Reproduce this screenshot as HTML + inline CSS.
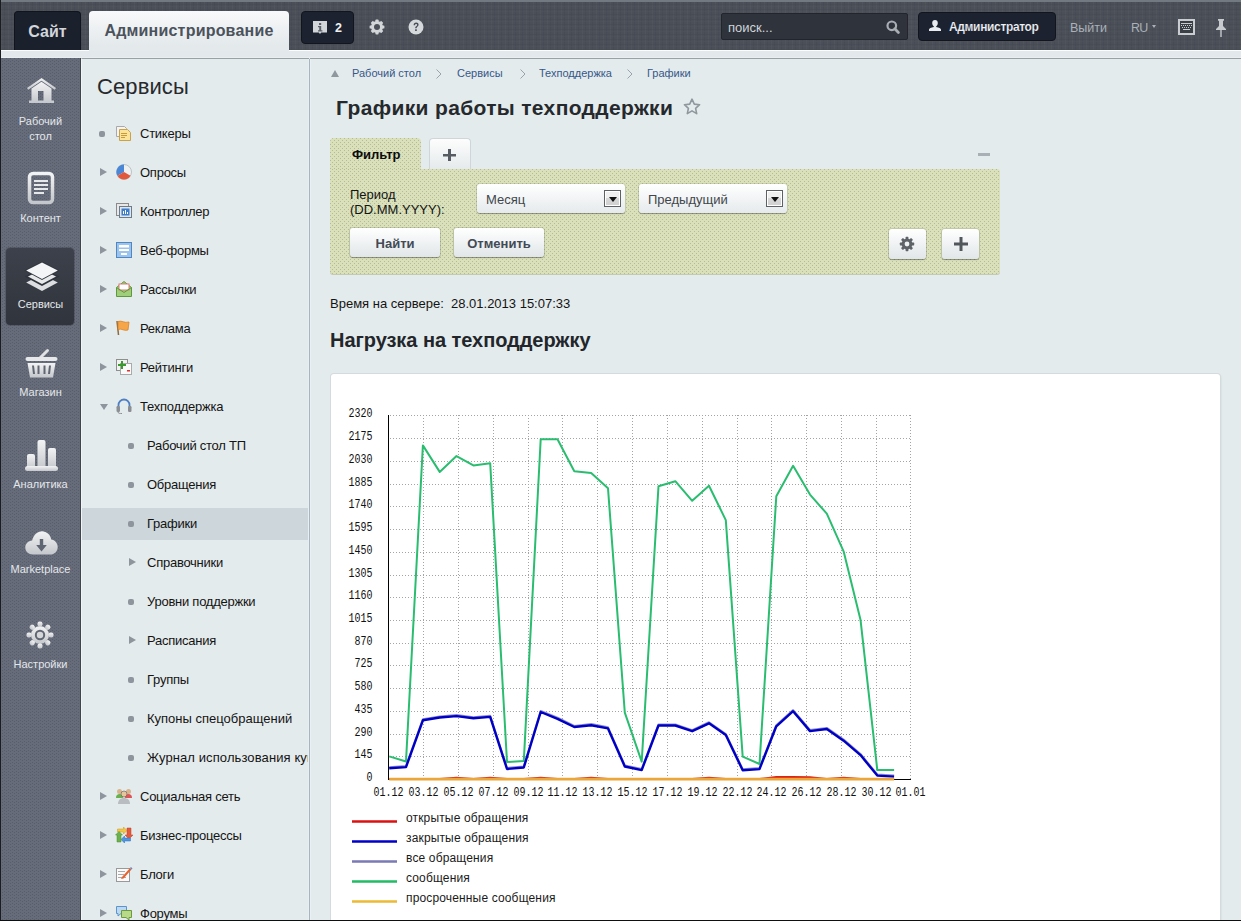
<!DOCTYPE html>
<html><head><meta charset="utf-8">
<style>
*{box-sizing:border-box;margin:0;padding:0}
html,body{width:1241px;height:921px;overflow:hidden;background:#e3e9eb;font-family:"Liberation Sans",sans-serif;position:relative}
.a{position:absolute}
svg{position:absolute;overflow:visible}
#frameL{left:0;top:0;width:1px;height:921px;background:#1b1d20;z-index:50}
#frameB{left:0;top:920px;width:1241px;height:1px;background:#0e0f10;z-index:50}
#hdr{left:0;top:0;width:1241px;height:50px;background:#4a4f58;border-top:2px solid #737980}
#strip{left:0;top:50px;width:1241px;height:8px;background:linear-gradient(#fbfcfc 0,#fbfcfc 1px,#e2e8eb 1px,#e2e8eb 7px,#e9eef0 7px)}
#side{left:0;top:58px;width:81px;height:863px;background-color:#666c7a;border-right:1px solid #3f444d}
#menu{left:81px;top:58px;width:228px;height:863px;background:#e4ebec;border-left:1px solid #f0f5f6;border-top:1px solid #9aa0a5}
#mline{left:308px;top:59px;width:3px;height:862px;background:linear-gradient(90deg,#e6eff4 0,#e6eff4 1px,#a9b4bc 1px,#a9b4bc 2px,#e8f1f4 2px)}
#content{left:310px;top:58px;width:931px;height:863px;background:#e4ebec;border-top:1px solid #9aa0a5}
.tabS{left:14px;top:11px;width:67px;height:39px;background:#1b202d;border:1px solid #11141b;border-bottom:none;border-radius:4px 4px 0 0;color:#d2d6db;font-weight:bold;font-size:16px;line-height:39px;text-align:center}
.tabA{left:89px;top:11px;width:200px;height:40px;background:linear-gradient(#f8f9fa,#e4e9eb 85%);border-radius:4px 4px 0 0;color:#4b525c;font-weight:bold;font-size:16px;line-height:40px;text-align:center;letter-spacing:0.2px}
.notif{left:301px;top:11px;width:53px;height:33px;background:#1c2230;border:1px solid #12151c;border-radius:4px}
.search{left:721px;top:13px;width:187px;height:27px;background:#2e333c;border:1px solid #22262c;border-radius:2px;color:#d0d4d8;font-size:13px;line-height:27px;padding-left:6px}
.admbtn{left:918px;top:12px;width:138px;height:29px;background:#1c2230;border:1px solid #12151c;border-radius:4px;color:#e8ebee;font-size:12px;font-weight:bold;line-height:27px;letter-spacing:-0.35px}
.hlink{color:#aab1b9;font-size:12px;top:19px;line-height:16px}
.lm{position:absolute;left:0;width:81px;text-align:center;color:#e4e7ea;font-size:11px;line-height:15px}
.mi{position:absolute;left:82px;width:226px;height:32px;font-size:13px;color:#141414;letter-spacing:-0.25px;line-height:32px;white-space:nowrap;overflow:hidden}
.mi .t{position:absolute;left:58px;top:1px}
.mi.sub .t{left:65px}
.mi.hl{background:transparent}
.hlbg{left:82px;top:508px;width:226px;height:32px;background:#ccd6db}
.bul{position:absolute;width:6px;height:6px;border-radius:2px;background:#8e959d;top:14px;left:17px}
.sub .bul{left:46px}
.tri{position:absolute;width:0;height:0;border-left:7px solid #8e959d;border-top:4px solid transparent;border-bottom:4px solid transparent;top:12px;left:18px}
.sub .tri{left:47px}
.mi svg{left:34px;top:8px;width:16px;height:16px}
.bc{position:absolute;top:66px;font-size:11px;line-height:14px;color:#35588a;white-space:nowrap}
.btn{position:absolute;height:29px;border-radius:3px;background:linear-gradient(#ffffff,#e1e6e8);box-shadow:0 1px 1px rgba(0,0,0,.3),0 0 0 1px rgba(0,0,0,.1);font-size:13px;font-weight:bold;color:#434b55;text-align:center;line-height:29px;padding-top:1px}
.sel{position:absolute;height:29px;border-radius:3px;background:linear-gradient(#ffffff,#e6eaec);box-shadow:0 1px 1px rgba(0,0,0,.3),0 0 0 1px rgba(0,0,0,.07);font-size:13px;color:#41464b;line-height:29px;padding-left:9px;padding-top:1px}
.sel .arr{position:absolute;right:4px;top:6px;width:17px;height:17px;border:1px solid #5e6164;background:linear-gradient(#efefef 0,#efefef 45%,#d8d8d8 45%,#d0d0d0);box-shadow:inset 0 0 0 1px #fff}
.sel .arr:after{content:"";position:absolute;left:3.5px;top:6px;border-top:5px solid #111;border-left:4.5px solid transparent;border-right:4.5px solid transparent}
.filt{background-color:#d9e0ba;overflow:hidden}
.lg{position:absolute;left:406px;font-size:12px;color:#1a1a1a;letter-spacing:0.15px;white-space:nowrap;line-height:14px}
.lgl{position:absolute;left:352px;width:45px;height:3px}

</style></head><body>
<div id="hdr" class="a"></div>
<svg style="left:0;top:2px" width="1241" height="48"><defs><pattern id="hp" width="7" height="5" patternUnits="userSpaceOnUse"><rect x="1" y="0" width="1" height="5" fill="#545a63" opacity="0.45"/><rect x="4" y="0" width="1" height="5" fill="#42474f" opacity="0.4"/><rect x="0" y="2" width="7" height="1" fill="#43484f" opacity="0.35"/><rect x="0" y="4" width="7" height="1" fill="#525860" opacity="0.3"/></pattern></defs><rect width="1241" height="48" fill="url(#hp)"/></svg>
<div id="strip" class="a"></div>
<div class="a tabS">Сайт</div>
<div class="a tabA">Администрирование</div>
<div class="a notif"></div>
<svg style="left:313px;top:21px" width="15" height="14" viewBox="0 0 15 14"><path d="M0 0h14v11.5H8.2L7 13 5.8 11.5H0z" fill="#d3d6d9"/><rect x="6" y="2" width="2.2" height="2" fill="#5b6068"/><path d="M5 5h3.2v4.3h1.2v1.3H5V9.3h1.2V6.3H5z" fill="#5b6068"/></svg>
<div class="a" style="left:335px;top:21px;color:#eef0f2;font-size:12.5px;line-height:14px;font-weight:bold">2</div>
<svg style="left:369px;top:19px" width="16" height="16" viewBox="0 0 16 16"><g fill="#d3d6d9"><circle cx="8" cy="8" r="6"/><rect x="6.4" y="0.6" width="3.2" height="3.2" rx="0.7" transform="rotate(0 8 8)"/><rect x="6.4" y="0.6" width="3.2" height="3.2" rx="0.7" transform="rotate(45 8 8)"/><rect x="6.4" y="0.6" width="3.2" height="3.2" rx="0.7" transform="rotate(90 8 8)"/><rect x="6.4" y="0.6" width="3.2" height="3.2" rx="0.7" transform="rotate(135 8 8)"/><rect x="6.4" y="0.6" width="3.2" height="3.2" rx="0.7" transform="rotate(180 8 8)"/><rect x="6.4" y="0.6" width="3.2" height="3.2" rx="0.7" transform="rotate(225 8 8)"/><rect x="6.4" y="0.6" width="3.2" height="3.2" rx="0.7" transform="rotate(270 8 8)"/><rect x="6.4" y="0.6" width="3.2" height="3.2" rx="0.7" transform="rotate(315 8 8)"/></g><circle cx="8" cy="8" r="3" fill="#4b5058"/></svg>
<svg style="left:408px;top:19px" width="16" height="16" viewBox="0 0 16 16"><circle cx="8" cy="8" r="7.5" fill="#d6d9dc"/><path d="M5.6 6.2c0-1.6 1-2.6 2.5-2.6s2.5.9 2.5 2.2c0 1.9-2 1.9-2 3.4H7.1c0-2 2-2.1 2-3.3 0-.6-.4-1-1-1-.7 0-1 .5-1 1.3z" fill="#4b5058"/><rect x="7.1" y="10.3" width="1.7" height="1.7" fill="#4b5058"/></svg>
<div class="a search">поиск...</div>
<svg style="left:886px;top:20px" width="14" height="14" viewBox="0 0 14 14"><circle cx="5.8" cy="5.8" r="4.3" fill="none" stroke="#a9aeb4" stroke-width="2.2"/><path d="M8.8 8.8l3.6 3.6" stroke="#a9aeb4" stroke-width="2.8" stroke-linecap="round"/></svg>
<div class="a admbtn"></div>
<svg style="left:929px;top:20px" width="12" height="11" viewBox="0 0 12 11"><path d="M6 0c1.8 0 2.8 1.3 2.8 3.1 0 1.5-.7 2.6-1.6 3.2v.6c2.6.4 4.8 1.4 4.8 2.6V11H0V9.5c0-1.2 2.2-2.2 4.8-2.6v-.6C3.9 5.7 3.2 4.6 3.2 3.1 3.2 1.3 4.2 0 6 0z" fill="#e9ecef"/></svg>
<div class="a" style="left:949px;top:20px;color:#eef0f3;font-size:12px;font-weight:bold;line-height:14px;letter-spacing:-0.35px;-webkit-text-stroke:0.15px #1c2230">Администратор</div>
<div class="a hlink" style="left:1070px;top:20px;font-size:12.5px">Выйти</div>
<div class="a hlink" style="left:1131px;top:20px;letter-spacing:-0.8px;font-size:12.5px">RU</div>
<div class="a" style="left:1152px;top:25px;border-top:3px solid #aab1b9;border-left:2.5px solid transparent;border-right:2.5px solid transparent"></div>
<svg style="left:1178px;top:19px" width="17" height="16" viewBox="0 0 17 16"><rect x="1" y="1" width="15" height="14" fill="#3b3f46" stroke="#c9cdd1" stroke-width="2"/><g fill="#c9cdd1"><rect x="3" y="4" width="11" height="1"/><rect x="3" y="6" width="1" height="1"/><rect x="5" y="6" width="1" height="1"/><rect x="7" y="6" width="1" height="1"/><rect x="9" y="6" width="1" height="1"/><rect x="11" y="6" width="1" height="1"/><rect x="13" y="6" width="1" height="1"/><rect x="4" y="8" width="1" height="1"/><rect x="6" y="8" width="1" height="1"/><rect x="8" y="8" width="1" height="1"/><rect x="10" y="8" width="1" height="1"/><rect x="12" y="8" width="1" height="1"/><rect x="5" y="10" width="7" height="1"/></g></svg>
<svg style="left:1215px;top:19px" width="12" height="18" viewBox="0 0 12 18"><path d="M3 0h6v1.5L8 2v5l3 3v1H1v-1l3-3V2L3 1.5z" fill="#c6cacf"/><rect x="5.3" y="11" width="1.4" height="7" fill="#c6cacf"/></svg>

<div id="side" class="a"></div>
<svg style="left:0;top:58px" width="80" height="863"><defs><pattern id="sp" width="4" height="3" patternUnits="userSpaceOnUse"><rect x="2" y="0" width="1" height="1" fill="#575d6b"/><rect x="0" y="2" width="1" height="1" fill="#575d6b"/></pattern><pattern id="fp" width="4" height="4" patternUnits="userSpaceOnUse"><rect x="2" y="0" width="1" height="1" fill="#b4bb98"/><rect x="0" y="2" width="1" height="1" fill="#b4bb98"/></pattern></defs><rect width="80" height="863" fill="url(#sp)"/></svg>
<div id="content" class="a"></div>
<div id="menu" class="a"></div>
<div id="mline" class="a"></div>
<div id="frameL" class="a"></div>
<div id="frameB" class="a"></div>
<!-- left icons -->
<div class="a" style="left:6px;top:248px;width:68px;height:77px;border-radius:4px;background:linear-gradient(#3c414b,#30343c);box-shadow:0 0 0 1px rgba(0,0,0,.15)"></div>
<svg style="left:27px;top:78px" width="29" height="26" viewBox="0 0 29 26"><defs><linearGradient id="ig" x1="0" y1="0" x2="0" y2="1"><stop offset="0" stop-color="#f2f3f4"/><stop offset="1" stop-color="#c4c7cb"/></linearGradient></defs><path d="M14.5 0L29 10l-1.3 1.8L14.5 2.8 1.3 11.8 0 10z" fill="url(#ig)"/><path d="M4.5 10.5L14.5 3.8l10 6.7V22.5h2.5V25H2V22.5h2.5zM11 13v9.5h5.5V13z" fill="url(#ig)"/></svg>
<div class="lm" style="top:114px">Рабочий<br>стол</div>
<svg style="left:28px;top:172px" width="26" height="32" viewBox="0 0 26 32"><rect x="1.5" y="1.5" width="23" height="29" rx="3.5" fill="none" stroke="url(#ig)" stroke-width="3.5"/><g fill="#e6e8ea"><rect x="6" y="8" width="14" height="2"/><rect x="6" y="12" width="14" height="2"/><rect x="6" y="16" width="14" height="2"/><rect x="6" y="20" width="10" height="2"/></g></svg>
<div class="lm" style="top:211px">Контент</div>
<svg style="left:26px;top:262px" width="33" height="31" viewBox="0 0 33 31"><path d="M16 12.5L31.8 20.5 16 29 0.2 20.5z" fill="#dcdee1"/><path d="M16 6.5L31.8 14.5 16 23 0.2 14.5z" fill="#e6e8ea" stroke="#30343c" stroke-width="1.6"/><path d="M16 0.5L31.8 8.5 16 17 0.2 8.5z" fill="#f4f5f6" stroke="#30343c" stroke-width="1.6"/><path d="M16 0.5L31.8 8.5 16 17 0.2 8.5z" fill="#f4f5f6"/></svg>
<div class="lm" style="top:297px">Сервисы</div>
<svg style="left:25px;top:349px" width="33" height="30" viewBox="0 0 33 30"><path d="M15.5 8.5L22.5 1.5" stroke="#e0e2e4" stroke-width="3" stroke-linecap="round"/><rect x="0.5" y="8" width="32" height="4" rx="2" fill="#e6e8ea"/><path d="M2.5 14h28l-2.5 14.5H5z" fill="url(#ig)"/><g fill="#5f6571"><path d="M7 16.5h2l1 8.5H8z"/><path d="M12.5 16.5h2v8.5h-2z"/><path d="M18.5 16.5h2v8.5h-2z"/><path d="M24 16.5h2l-1 8.5h-2z"/></g></svg>
<div class="lm" style="top:385px">Магазин</div>
<svg style="left:25px;top:440px" width="33" height="31" viewBox="0 0 33 31"><g fill="url(#ig)"><rect x="2" y="14" width="8" height="15" rx="2"/><rect x="12.5" y="0" width="8" height="29" rx="2"/><rect x="23" y="8" width="8" height="21" rx="2"/><rect x="0" y="26" width="33" height="5" rx="2.5"/></g></svg>
<div class="lm" style="top:477px">Аналитика</div>
<svg style="left:25px;top:531px" width="33" height="24" viewBox="0 0 33 24"><path d="M8 23.5C3.5 23.5 0.3 20.5 0.3 16.5c0-3.8 3-6.8 6.8-7C8.5 4 12.5 0.3 17 0.3c4.8 0 8.6 3.6 9.2 8.3 3.6.6 6.5 3.5 6.5 7.3 0 4.2-3.2 7.6-7.4 7.6z" fill="url(#ig)"/><path d="M14.8 8h3.4v6h3.6l-5.3 6.5-5.3-6.5h3.6z" fill="#5f6571"/></svg>
<div class="lm" style="top:562px">Marketplace</div>
<svg style="left:26px;top:621px" width="28" height="28" viewBox="0 0 28 28"><g fill="url(#ig)"><circle cx="14" cy="14" r="9"/><g id="tth"><rect x="11.5" y="0.5" width="5" height="5" rx="2"/><rect x="11.5" y="22.5" width="5" height="5" rx="2"/><rect x="0.5" y="11.5" width="5" height="5" rx="2"/><rect x="22.5" y="11.5" width="5" height="5" rx="2"/></g><use href="#tth" transform="rotate(45 14 14)"/></g><circle cx="14" cy="14" r="5.2" fill="#5f6571"/><circle cx="14" cy="14" r="3.2" fill="#d4d6d9"/></svg>
<div class="lm" style="top:657px">Настройки</div>
<div class="a hlbg"></div>
<div class="a" style="left:97px;top:73px;font-size:22px;line-height:28px;color:#26292d;letter-spacing:0.1px">Сервисы</div>
<div class="mi" style="top:117px"><div class="bul"></div><svg viewBox="0 0 16 16" width="16" height="16"><path d="M0.5 1.5h8l2 2v8h-10z" fill="#f4f4f4" stroke="#a9a9a9"/><path d="M3.5 4.5h8l3 3v8h-11z" fill="#fbe39a" stroke="#c9a24a"/><g fill="#c99a3a"><rect x="5" y="8" width="6" height="1"/><rect x="5" y="10" width="6" height="1"/><rect x="5" y="12" width="4" height="1"/></g></svg><span class="t">Стикеры</span></div>
<div class="mi" style="top:156px"><div class="tri"></div><svg viewBox="0 0 16 16" width="16" height="16"><circle cx="8" cy="8" r="7.5" fill="#f0f0f0" stroke="#9aa" stroke-width="0.6"/><path d="M8 8V0.5A7.5 7.5 0 0 0 1.5 11.8z" fill="#4a87d6"/><path d="M8 8L1.5 11.8A7.5 7.5 0 0 0 14.5 11.8z" fill="#e2583a"/></svg><span class="t">Опросы</span></div>
<div class="mi" style="top:195px"><div class="tri"></div><svg viewBox="0 0 16 16" width="16" height="16"><rect x="0.5" y="0.5" width="12" height="12" fill="#e8e8e8" stroke="#8a8a8a"/><rect x="3.5" y="3.5" width="12" height="11" fill="#dfe6ee" stroke="#6d7a88"/><rect x="5.5" y="5.5" width="8" height="7" fill="#3d7cc9"/><g fill="#fff"><rect x="7" y="8" width="1" height="3"/><rect x="9" y="7" width="1" height="4"/><rect x="11" y="9" width="1" height="2"/></g></svg><span class="t">Контроллер</span></div>
<div class="mi" style="top:234px"><div class="tri"></div><svg viewBox="0 0 16 16" width="16" height="16"><rect x="0.5" y="0.5" width="15" height="15" fill="#9cc3ec" stroke="#4f86c4"/><rect x="3" y="3" width="10" height="2.5" fill="#fff"/><rect x="3" y="7" width="10" height="2" fill="#fff"/><rect x="5" y="11" width="6" height="2" fill="#fff"/></svg><span class="t">Веб-формы</span></div>
<div class="mi" style="top:273px"><div class="tri"></div><svg viewBox="0 0 16 16" width="16" height="16"><path d="M0.5 6.5L8 0.5l7.5 6v9H0.5z" fill="#9fcf7a" stroke="#5e9a3c"/><rect x="3" y="3" width="10" height="6" fill="#fff" stroke="#d77"/><path d="M0.5 6.5L8 11.5l7.5-5" fill="none" stroke="#5e9a3c"/></svg><span class="t">Рассылки</span></div>
<div class="mi" style="top:312px"><div class="tri"></div><svg viewBox="0 0 16 16" width="16" height="16"><path d="M1 1l1.5 14" stroke="#8d6a3a" stroke-width="1.5"/><path d="M2 1.5c4-1.5 6 2 11 0.5l-1 8c-4 1.5-6-2-10-0.5z" fill="#f6a64a" stroke="#d9822a" stroke-width="0.8"/></svg><span class="t">Реклама</span></div>
<div class="mi" style="top:351px"><div class="tri"></div><svg viewBox="0 0 16 16" width="16" height="16"><rect x="0.5" y="0.5" width="11" height="11" fill="#f2f2f2" stroke="#8e8e8e"/><rect x="4.5" y="4.5" width="11" height="11" fill="#fafafa" stroke="#aaa"/><path d="M5 2h2v3h3v2H7v3H5V7H2V5h3z" fill="#3a9a2e"/><rect x="11" y="11" width="3" height="1.5" fill="#d33"/></svg><span class="t">Рейтинги</span></div>
<div class="mi" style="top:390px"><div style="position:absolute;left:18px;top:14px;border-top:6px solid #8e959d;border-left:4.5px solid transparent;border-right:4.5px solid transparent"></div><svg viewBox="0 0 16 16" width="16" height="16"><path d="M2.5 9V7a5.5 5.5 0 0 1 11 0v2" fill="none" stroke="#4e7fc4" stroke-width="1.8"/><rect x="0.5" y="8" width="3.5" height="6" rx="1.2" fill="#8b8f94"/><rect x="12" y="8" width="3.5" height="6" rx="1.2" fill="#8b8f94"/><path d="M2 14c0 1.5 2 1.5 4 1.5" fill="none" stroke="#8b8f94" stroke-width="1"/></svg><span class="t">Техподдержка</span></div>
<div class="mi sub" style="top:429px"><div class="bul"></div><span class="t">Рабочий стол ТП</span></div>
<div class="mi sub" style="top:468px"><div class="bul"></div><span class="t">Обращения</span></div>
<div class="mi sub hl" style="top:507px"><div class="bul"></div><span class="t">Графики</span></div>
<div class="mi sub" style="top:546px"><div class="tri"></div><span class="t">Справочники</span></div>
<div class="mi sub" style="top:585px"><div class="bul"></div><span class="t">Уровни поддержки</span></div>
<div class="mi sub" style="top:624px"><div class="tri"></div><span class="t">Расписания</span></div>
<div class="mi sub" style="top:663px"><div class="bul"></div><span class="t">Группы</span></div>
<div class="mi sub" style="top:702px"><div class="bul"></div><span class="t" style="letter-spacing:0">Купоны спецобращений</span></div>
<div class="mi sub" style="top:741px"><div class="bul"></div><span class="t" style="letter-spacing:0.1px">Журнал использования купонов</span></div>
<div class="mi" style="top:780px"><div class="tri"></div><svg viewBox="0 0 16 16" width="16" height="16"><circle cx="3.5" cy="3.5" r="2.5" fill="#d9b38c"/><circle cx="12.5" cy="3.5" r="2.5" fill="#d9b38c"/><path d="M0 10c0-3 1.5-4 3.5-4s3.5 1 3.5 4z" fill="#6ab04c"/><path d="M9 10c0-3 1.5-4 3.5-4s3.5 1 3.5 4z" fill="#d55"/><circle cx="8" cy="6" r="3" fill="#e8c49a" stroke="#555" stroke-width="0.6"/><path d="M2 16c0-4 2.5-6 6-6s6 2 6 6z" fill="#b9bcc0"/></svg><span class="t">Социальная сеть</span></div>
<div class="mi" style="top:819px"><div class="tri"></div><svg viewBox="0 0 16 16" width="16" height="16"><path d="M1.5 2h6V0l3.5 3.5L7.5 7V5h-6z" fill="#f3c643" stroke="#c9982a" stroke-width="0.5"/><path d="M11 1h4v7h2l-4 4-4-4h2z" fill="#e65a3a" stroke="#b8402a" stroke-width="0.5"/><path d="M14.5 14h-6v2L5 12.5 8.5 9v2h6z" fill="#4f95e0" stroke="#2f6fb8" stroke-width="0.5"/><path d="M5 15H1V8h-1.5L3 4.5 6.5 8H5z" fill="#6cb24a" stroke="#4a8a30" stroke-width="0.5"/></svg><span class="t">Бизнес-процессы</span></div>
<div class="mi" style="top:858px"><div class="tri"></div><svg viewBox="0 0 16 16" width="16" height="16"><rect x="0.5" y="2.5" width="13" height="13" fill="#fafafa" stroke="#999"/><g fill="#aaa"><rect x="2" y="5" width="7" height="1"/><rect x="2" y="8" width="6" height="1"/><rect x="2" y="11" width="8" height="1"/></g><path d="M6 11l8-9 1.5 1.5-8 9L5 13z" fill="#e8622e"/><path d="M14 2l1-1 1.5 1.5-1 1z" fill="#5a8ad6"/></svg><span class="t">Блоги</span></div>
<div class="mi" style="top:897px"><div class="tri"></div><svg viewBox="0 0 16 16" width="16" height="16"><path d="M0.5 1.5h10v7H5l-3 2.5V8.5H0.5z" fill="#bcd8f2" stroke="#5b95cf"/><path d="M5.5 5.5h10v7H13v2.5L10 12.5H5.5z" fill="#b8d98a" stroke="#6a9d3a"/></svg><span class="t">Форумы</span></div><!-- breadcrumb -->
<div class="a" style="left:331px;top:70px;border-bottom:7px solid #8f979f;border-left:4.5px solid transparent;border-right:4.5px solid transparent"></div>
<div class="bc" style="left:352px">Рабочий стол</div>
<svg style="left:436px;top:69px" width="6" height="10" viewBox="0 0 6 10"><path d="M0.5 0.5L5 5 0.5 9.5" fill="none" stroke="#9aa3ab" stroke-width="1"/></svg>
<div class="bc" style="left:457px">Сервисы</div>
<svg style="left:520px;top:69px" width="6" height="10" viewBox="0 0 6 10"><path d="M0.5 0.5L5 5 0.5 9.5" fill="none" stroke="#9aa3ab" stroke-width="1"/></svg>
<div class="bc" style="left:539px">Техподдержка</div>
<svg style="left:627px;top:69px" width="6" height="10" viewBox="0 0 6 10"><path d="M0.5 0.5L5 5 0.5 9.5" fill="none" stroke="#9aa3ab" stroke-width="1"/></svg>
<div class="bc" style="left:647px">Графики</div>
<!-- title -->
<div class="a" style="left:336px;top:95px;font-size:21px;line-height:26px;font-weight:bold;color:#25292d;letter-spacing:0.35px;white-space:nowrap">Графики работы техподдержки</div>
<svg style="left:683px;top:98px" width="18" height="18" viewBox="0 0 18 18"><path d="M9 1.2l2.3 4.9 5.3.6-4 3.6 1.1 5.3L9 12.9l-4.7 2.7 1.1-5.3-4-3.6 5.3-.6z" fill="none" stroke="#8f979f" stroke-width="1.6" stroke-linejoin="round"/></svg>
<!-- filter -->
<div class="a filt" style="left:330px;top:138px;width:91px;height:32px;border-radius:4px 4px 0 0"><svg style="left:0;top:0" width="680" height="120"><rect width="680" height="120" fill="url(#fp)"/></svg></div>
<div class="a" style="left:352px;top:147px;font-size:13px;font-weight:bold;color:#0c0c0c;line-height:16px">Фильтр</div>
<div class="a" style="left:429px;top:138px;width:42px;height:31px;border-radius:4px 4px 0 0;background:linear-gradient(#fdfdfd,#e5eaec);border:1px solid #cfd6d9;border-bottom:none"></div>
<svg style="left:443px;top:149px" width="13" height="12" viewBox="0 0 13 12"><path d="M5 0h3v5h5v2.5H8V12H5V7.5H0V5h5z" fill="#575c62"/></svg>
<div class="a" style="left:978px;top:153px;width:12px;height:2.5px;background:#a9b0b5"></div>
<div class="a filt" style="left:330px;top:169px;width:670px;height:105px;border-radius:0 3px 3px 3px;box-shadow:0 1px 0 #c4cbb0"><svg style="left:0;top:0" width="680" height="120"><rect width="680" height="120" fill="url(#fp)"/></svg></div>
<div class="a" style="left:350px;top:187px;font-size:13px;line-height:15px;color:#141414">Период<br>(DD.MM.YYYY):</div>
<div class="sel" style="left:477px;top:184px;width:148px">Месяц<div class="arr"></div></div>
<div class="sel" style="left:639px;top:184px;width:148px">Предыдущий<div class="arr"></div></div>
<div class="btn" style="left:350px;top:228px;width:90px">Найти</div>
<div class="btn" style="left:454px;top:228px;width:90px">Отменить</div>
<div class="btn" style="left:889px;top:229px;width:37px;height:30px"></div>
<svg style="left:899px;top:236px" width="16" height="16" viewBox="0 0 16 16"><g fill="#5e6368"><circle cx="8" cy="8" r="5.4"/><g id="ft"><rect x="6.6" y="0.8" width="2.8" height="3" rx="0.6"/><rect x="6.6" y="12.2" width="2.8" height="3" rx="0.6"/><rect x="0.8" y="6.6" width="3" height="2.8" rx="0.6"/><rect x="12.2" y="6.6" width="3" height="2.8" rx="0.6"/></g><use href="#ft" transform="rotate(45 8 8)"/></g><circle cx="8" cy="8" r="2.4" fill="#eef1f2"/></svg>
<div class="btn" style="left:942px;top:229px;width:37px;height:30px"></div>
<svg style="left:954px;top:237px" width="14" height="14" viewBox="0 0 14 14"><path d="M5.5 0h3v5.5H14v3H8.5V14h-3V8.5H0v-3h5.5z" fill="#52575c"/></svg>
<!-- time -->
<div class="a" style="left:330px;top:296px;font-size:13px;line-height:16px;color:#141414;white-space:nowrap">Время на сервере:&nbsp; 28.01.2013 15:07:33</div>
<div class="a" style="left:330px;top:328px;font-size:20px;line-height:24px;font-weight:bold;color:#22262a;letter-spacing:-0.05px;white-space:nowrap">Нагрузка на техподдержку</div>
<!-- panel -->
<div class="a" style="left:331px;top:374px;width:889px;height:560px;background:#fff;border-radius:3px;box-shadow:0 0 0 1px #d3dbdf,1px 1px 2px rgba(0,0,0,.12)"></div>

<svg style="left:0;top:0" width="1241" height="921" viewBox="0 0 1241 921">
<g stroke="#a4a4a4" stroke-width="1" stroke-dasharray="1 2" shape-rendering="crispEdges"><line x1="390" y1="415.5" x2="911" y2="415.5"/><line x1="390" y1="438.5" x2="911" y2="438.5"/><line x1="390" y1="461.5" x2="911" y2="461.5"/><line x1="390" y1="484.5" x2="911" y2="484.5"/><line x1="390" y1="506.5" x2="911" y2="506.5"/><line x1="390" y1="529.5" x2="911" y2="529.5"/><line x1="390" y1="552.5" x2="911" y2="552.5"/><line x1="390" y1="575.5" x2="911" y2="575.5"/><line x1="390" y1="597.5" x2="911" y2="597.5"/><line x1="390" y1="620.5" x2="911" y2="620.5"/><line x1="390" y1="643.5" x2="911" y2="643.5"/><line x1="390" y1="665.5" x2="911" y2="665.5"/><line x1="390" y1="688.5" x2="911" y2="688.5"/><line x1="390" y1="711.5" x2="911" y2="711.5"/><line x1="390" y1="734.5" x2="911" y2="734.5"/><line x1="390" y1="756.5" x2="911" y2="756.5"/><line x1="423.5" y1="415" x2="423.5" y2="779"/><line x1="458.5" y1="415" x2="458.5" y2="779"/><line x1="493.5" y1="415" x2="493.5" y2="779"/><line x1="528.5" y1="415" x2="528.5" y2="779"/><line x1="562.5" y1="415" x2="562.5" y2="779"/><line x1="597.5" y1="415" x2="597.5" y2="779"/><line x1="632.5" y1="415" x2="632.5" y2="779"/><line x1="667.5" y1="415" x2="667.5" y2="779"/><line x1="702.5" y1="415" x2="702.5" y2="779"/><line x1="737.5" y1="415" x2="737.5" y2="779"/><line x1="771.5" y1="415" x2="771.5" y2="779"/><line x1="806.5" y1="415" x2="806.5" y2="779"/><line x1="841.5" y1="415" x2="841.5" y2="779"/><line x1="876.5" y1="415" x2="876.5" y2="779"/><line x1="910.5" y1="415" x2="910.5" y2="779"/></g>
<g stroke="#000" stroke-width="1" shape-rendering="crispEdges"><line x1="388.5" y1="415" x2="388.5" y2="780"/><line x1="388" y1="779.5" x2="911" y2="779.5"/></g>
<g font-family="Liberation Mono" font-size="10" fill="#111"><text transform="translate(372.5 417) scale(1 1.22)" text-anchor="end">2320</text><text transform="translate(372.5 440) scale(1 1.22)" text-anchor="end">2175</text><text transform="translate(372.5 463) scale(1 1.22)" text-anchor="end">2030</text><text transform="translate(372.5 486) scale(1 1.22)" text-anchor="end">1885</text><text transform="translate(372.5 508) scale(1 1.22)" text-anchor="end">1740</text><text transform="translate(372.5 531) scale(1 1.22)" text-anchor="end">1595</text><text transform="translate(372.5 554) scale(1 1.22)" text-anchor="end">1450</text><text transform="translate(372.5 577) scale(1 1.22)" text-anchor="end">1305</text><text transform="translate(372.5 599) scale(1 1.22)" text-anchor="end">1160</text><text transform="translate(372.5 622) scale(1 1.22)" text-anchor="end">1015</text><text transform="translate(372.5 645) scale(1 1.22)" text-anchor="end">870</text><text transform="translate(372.5 667) scale(1 1.22)" text-anchor="end">725</text><text transform="translate(372.5 690) scale(1 1.22)" text-anchor="end">580</text><text transform="translate(372.5 713) scale(1 1.22)" text-anchor="end">435</text><text transform="translate(372.5 736) scale(1 1.22)" text-anchor="end">290</text><text transform="translate(372.5 758) scale(1 1.22)" text-anchor="end">145</text><text transform="translate(372.5 781) scale(1 1.22)" text-anchor="end">0</text><text transform="translate(388.5 796) scale(1 1.22)" text-anchor="middle">01.12</text><text transform="translate(423.5 796) scale(1 1.22)" text-anchor="middle">03.12</text><text transform="translate(458.5 796) scale(1 1.22)" text-anchor="middle">05.12</text><text transform="translate(493.5 796) scale(1 1.22)" text-anchor="middle">07.12</text><text transform="translate(528.5 796) scale(1 1.22)" text-anchor="middle">09.12</text><text transform="translate(562.5 796) scale(1 1.22)" text-anchor="middle">11.12</text><text transform="translate(597.5 796) scale(1 1.22)" text-anchor="middle">13.12</text><text transform="translate(632.5 796) scale(1 1.22)" text-anchor="middle">15.12</text><text transform="translate(667.5 796) scale(1 1.22)" text-anchor="middle">17.12</text><text transform="translate(702.5 796) scale(1 1.22)" text-anchor="middle">19.12</text><text transform="translate(737.5 796) scale(1 1.22)" text-anchor="middle">22.12</text><text transform="translate(771.5 796) scale(1 1.22)" text-anchor="middle">24.12</text><text transform="translate(806.5 796) scale(1 1.22)" text-anchor="middle">26.12</text><text transform="translate(841.5 796) scale(1 1.22)" text-anchor="middle">28.12</text><text transform="translate(876.5 796) scale(1 1.22)" text-anchor="middle">30.12</text><text transform="translate(910.5 796) scale(1 1.22)" text-anchor="middle">01.01</text></g>
<polyline points="389.2,756.4 406.0,761.5 422.9,445.4 439.7,471.9 456.5,456.1 473.4,465.4 490.2,463.2 507.0,762.0 523.8,761.1 540.7,439.2 557.5,439.2 574.3,471.3 591.2,473.0 608.0,488.3 624.8,712.6 641.7,761.6 658.5,486.2 675.3,481.2 692.2,500.8 709.0,485.7 725.8,520.1 742.7,756.6 759.5,764.0 776.3,496.3 793.1,465.8 810.0,494.6 826.8,513.7 843.6,551.3 860.5,619.7 877.3,770.1 894.1,770.1" fill="none" stroke="#2abd70" stroke-width="2" stroke-linejoin="round"/>
<polyline points="389.2,767.2 406.0,766.0 422.9,719.2 439.7,716.4 456.5,715.0 473.4,717.2 490.2,715.8 507.0,767.9 523.8,766.4 540.7,710.9 557.5,717.7 574.3,725.9 591.2,724.1 608.0,727.3 624.8,765.4 641.7,769.0 658.5,724.4 675.3,724.4 692.2,730.1 709.0,722.2 725.8,734.0 742.7,769.2 759.5,768.0 776.3,725.2 793.1,710.1 810.0,730.0 826.8,727.9 843.6,739.6 860.5,754.0 877.3,774.5 894.1,775.5" fill="none" stroke="#8d8dd0" stroke-width="2" stroke-linejoin="round"/>
<polyline points="389.2,768.3 406.0,767.1 422.9,720.3 439.7,717.5 456.5,716.1 473.4,718.3 490.2,716.9 507.0,769.0 523.8,767.5 540.7,712.0 557.5,718.8 574.3,727.0 591.2,725.2 608.0,728.4 624.8,766.5 641.7,770.1 658.5,725.5 675.3,725.5 692.2,731.2 709.0,723.3 725.8,735.1 742.7,770.3 759.5,769.1 776.3,726.3 793.1,711.2 810.0,731.1 826.8,729.0 843.6,740.7 860.5,755.1 877.3,775.6 894.1,776.6" fill="none" stroke="#0000c4" stroke-width="2.4" stroke-linejoin="round"/>
<polyline points="389.2,779.0 406.0,779.0 422.9,779.0 439.7,779.0 456.5,777.8 473.4,779.0 490.2,777.8 507.0,779.0 523.8,779.0 540.7,777.8 557.5,779.0 574.3,779.0 591.2,777.8 608.0,779.0 624.8,779.0 641.7,779.0 658.5,779.0 675.3,779.0 692.2,779.0 709.0,777.8 725.8,779.0 742.7,779.0 759.5,779.0 776.3,777.0 793.1,777.0 810.0,777.3 826.8,779.0 843.6,777.8 860.5,779.0 877.3,779.0 894.1,779.0" fill="none" stroke="#dd2211" stroke-width="2"/>
<polyline points="389.2,779.2 406.0,779.2 422.9,779.2 439.7,779.2 456.5,779.2 473.4,779.2 490.2,779.2 507.0,779.2 523.8,779.2 540.7,779.2 557.5,779.2 574.3,779.2 591.2,779.2 608.0,779.2 624.8,779.2 641.7,779.2 658.5,779.2 675.3,779.2 692.2,779.2 709.0,779.2 725.8,779.2 742.7,779.2 759.5,779.2 776.3,779.2 793.1,779.2 810.0,779.2 826.8,779.2 843.6,779.2 860.5,779.2 877.3,779.2 894.1,779.2" fill="none" stroke="#eba63a" stroke-width="2.8"/>
<rect x="352" y="820.25" width="45" height="2.5" fill="#dc1010"/>
<rect x="352" y="840.25" width="45" height="2.5" fill="#0000c8"/>
<rect x="352" y="860.25" width="45" height="2.5" fill="#7a7ab4"/>
<rect x="352" y="880.25" width="45" height="2.5" fill="#22bb66"/>
<rect x="352" y="900.25" width="45" height="2.5" fill="#ecbb33"/>
</svg>
<div class="lg" style="top:811px">открытые обращения</div>
<div class="lg" style="top:831px">закрытые обращения</div>
<div class="lg" style="top:851px">все обращения</div>
<div class="lg" style="top:871px">сообщения</div>
<div class="lg" style="top:891px">просроченные сообщения</div>
</body></html>
